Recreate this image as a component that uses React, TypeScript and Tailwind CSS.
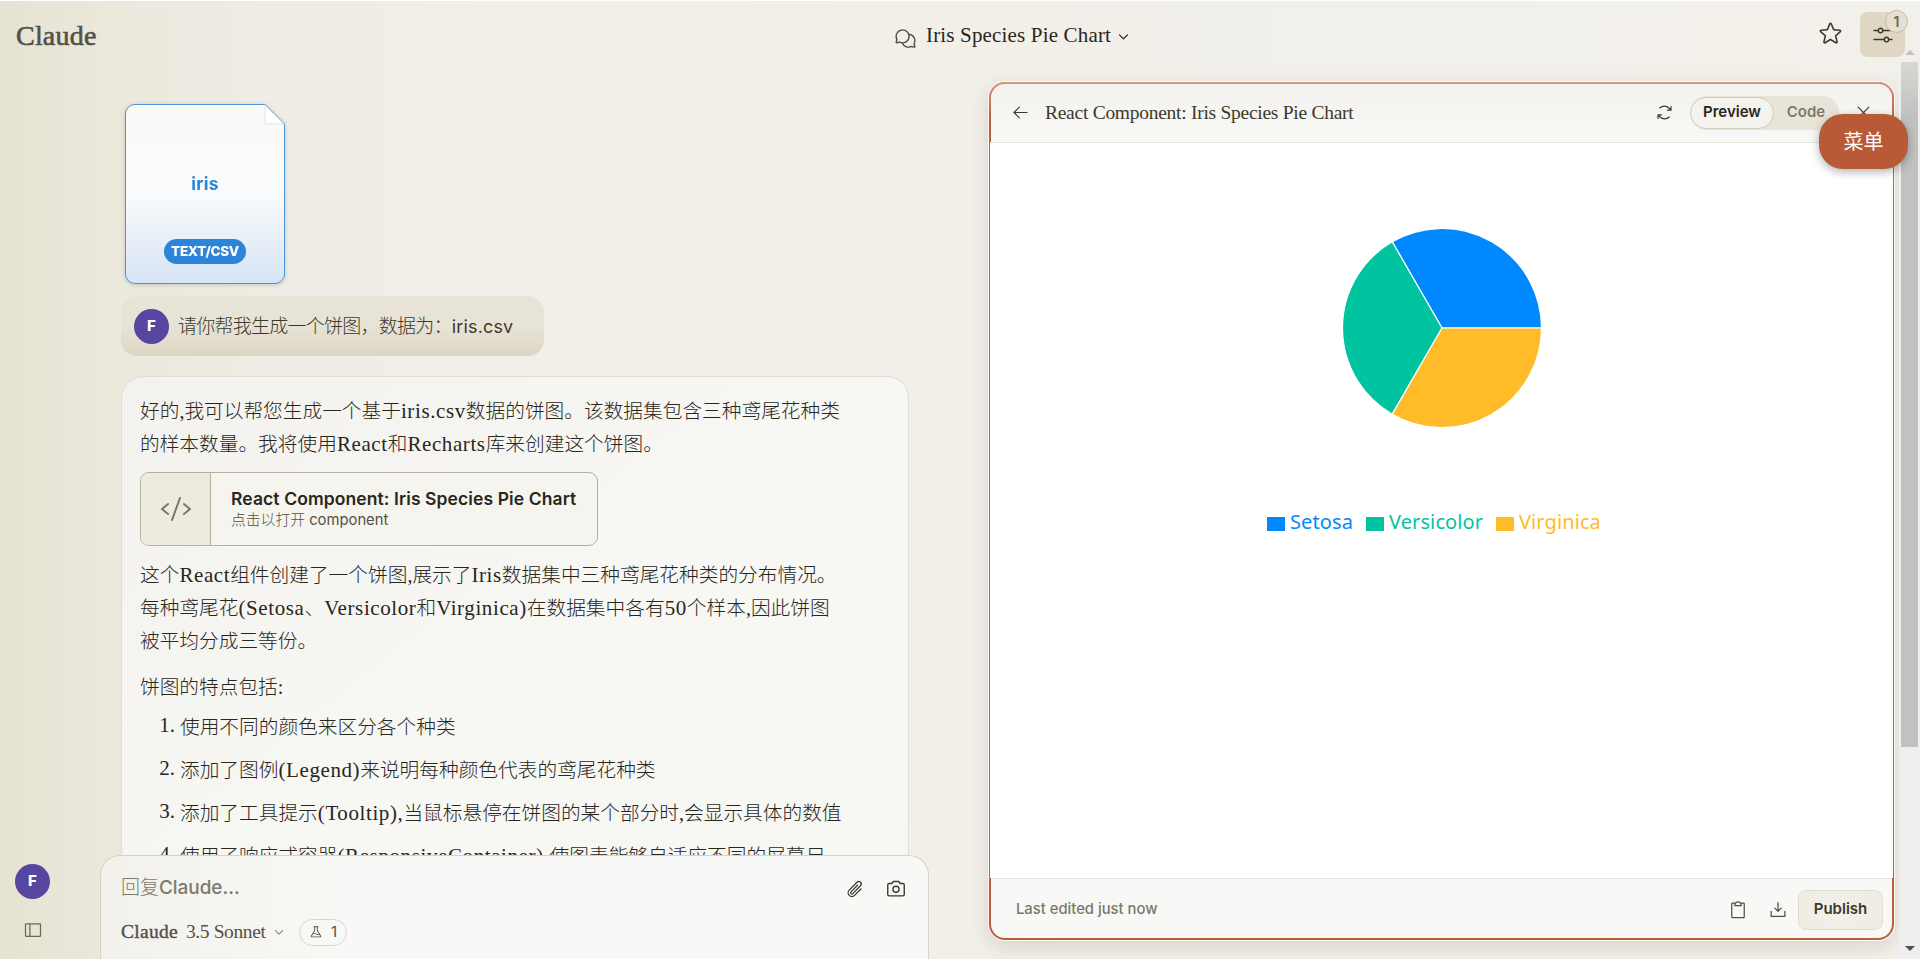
import {
  PiArrowLeft,
  PiArrowsClockwise,
  PiCamera,
  PiCaretDown,
  PiCaretDownBold,
  PiChatsCircle,
  PiClipboard,
  PiCode,
  PiDownloadSimple,
  PiFlask,
  PiPaperclip,
  PiSidebarSimple,
  PiStar,
  PiX,
} from "react-icons/pi";

const species = [
  { name: "Setosa", fill: "#0088FE", dot: "bg-[#0088FE]", text: "text-[#0088FE]", width: "w-[63px]" },
  { name: "Versicolor", fill: "#00C49F", dot: "bg-[#00C49F]", text: "text-[#00C49F]", width: "w-[94px]" },
  { name: "Virginica", fill: "#FFBB28", dot: "bg-[#FFBB28]", text: "text-[#FFBB28]", width: "w-[83px]" },
];

const intro = [
  "好的,我可以帮您生成一个基于iris.csv数据的饼图。该数据集包含三种鸢尾花种类",
  "的样本数量。我将使用React和Recharts库来创建这个饼图。",
];

const summary = [
  "这个React组件创建了一个饼图,展示了Iris数据集中三种鸢尾花种类的分布情况。",
  "每种鸢尾花(Setosa、Versicolor和Virginica)在数据集中各有50个样本,因此饼图",
  "被平均分成三等份。",
];

const items = [
  "使用不同的颜色来区分各个种类",
  "添加了图例(Legend)来说明每种颜色代表的鸢尾花种类",
  "添加了工具提示(Tooltip),当鼠标悬停在饼图的某个部分时,会显示具体的数值",
  "使用了响应式容器(ResponsiveContainer),使图表能够自适应不同的屏幕尺",
];

// Latin runs get the serif face, everything else stays in the CJK one
function Mixed({ text }: { text: string }) {
  return (
    <>
      {text.split(/([\x20-\x7e]+)/).map((part, i) =>
        i % 2 ? (
          <span
            key={i}
            className={
              part.length > 1
                ? "font-['Liberation_Serif',serif] text-[21px] font-normal tracking-[0.6px]"
                : "font-['Liberation_Serif',serif] text-[20px] font-normal"
            }
          >
            {part}
          </span>
        ) : (
          part
        )
      )}
    </>
  );
}

function Lines({ lines }: { lines: string[] }) {
  return (
    <p>
      {lines.map((line) => (
        <span key={line} className="block h-[33px] whitespace-nowrap leading-[33px]">
          <Mixed text={line} />
        </span>
      ))}
    </p>
  );
}

function Avatar() {
  return (
    <div className="flex size-[35px] shrink-0 items-center justify-center rounded-full bg-[#5645a1] font-['Inter',sans-serif] text-[15px] font-extrabold text-white">
      F
    </div>
  );
}

function SlidersIcon() {
  return (
    <svg width="20" height="16" viewBox="0 0 20 16" fill="none" stroke="currentColor" strokeWidth="1.4" strokeLinecap="round">
      <path d="M1 3.5h4.2M9.8 3.5H19M1 12.5h10.2M15.8 12.5H19" />
      <circle cx="7.5" cy="3.5" r="2.2" />
      <circle cx="13.5" cy="12.5" r="2.2" />
    </svg>
  );
}

function Header() {
  return (
    <header className="flex h-[81px] shrink-0 border-t border-white pl-4">
      <div className="w-[878px] pt-[19px] font-['Liberation_Serif',serif] text-[28px] leading-8 tracking-[0.2px] text-[#535146] [-webkit-text-stroke:0.6px]">
        Claude
      </div>
      <div className="flex h-[70px] items-center text-[#29261b]">
        <PiChatsCircle className="mt-1 size-[23px] text-[#535146]" />
        <span className="ml-[9px] w-[187px] whitespace-nowrap font-['Liberation_Serif',serif] text-[21px] tracking-[0.17px]">
          Iris Species Pie Chart
        </span>
        <PiCaretDownBold className="ml-[4px] size-[13px]" />
      </div>
      <div className="ml-auto mr-[15px] flex pt-[11px] text-[#3d3929]">
        <PiStar className="mr-[17px] mt-[9px] size-[25px]" />
        <div className="relative flex size-[45px] items-center justify-center rounded-lg bg-[#dfd7c4]">
          <SlidersIcon />
          <span className="absolute -right-[3px] -top-[2px] flex size-[23px] items-center justify-center rounded-full border border-[#c4bda8] bg-[#e5dfd0] font-['Inter',sans-serif] text-[14px] font-semibold text-[#6b6651]">
            1
          </span>
        </div>
      </div>
    </header>
  );
}

function FileCard() {
  return (
    <div className="ml-1 h-[180px] w-[160px] drop-shadow-[0_1px_2px_rgba(60,50,20,0.2)]">
      <div className="relative flex h-full flex-col items-center rounded-[10px] border border-[#4a94dd] bg-gradient-to-b from-[#fafaf7] via-[#fafbfc] to-[#d6e5f5] font-['Inter',sans-serif] [clip-path:polygon(0_0,140px_0,160px_20px,100%_100%,0_100%)]">
        <svg className="absolute -right-px -top-px" width="21" height="22" viewBox="0 0 21 22">
          <path d="M1 0v20h20z" fill="#fff" stroke="#dfe3e6" />
          <path d="M1 0l20 20" stroke="#4a94dd" strokeWidth="1.2" />
        </svg>
        <span className="mt-[67px] text-[17.5px] font-bold leading-6 tracking-[0.2px] text-[#2c84db]">iris</span>
        <span className="mt-[43px] flex h-[25px] w-[82px] items-center justify-center rounded-full bg-[#2c84db] text-[13.5px] font-extrabold tracking-[-0.3px] text-white">
          TEXT/CSV
        </span>
      </div>
    </div>
  );
}

function ArtifactButton() {
  return (
    <div className="mb-[11px] mt-[13px] flex h-[74px] w-[458px] overflow-hidden rounded-[9px] border border-[#b4b09f] bg-[#f5f4ef] font-['Inter','Noto_Sans_CJK_SC',sans-serif]">
      <div className="flex w-[70px] items-center justify-center border-r border-[#b4b09f] bg-[#edeade] text-[#7a7766]">
        <PiCode className="size-8" />
      </div>
      <div className="whitespace-nowrap pl-5 pt-[14px]">
        <div className="text-[17.5px] font-semibold leading-6 tracking-[0.1px] text-[#29261b]">
          React Component: Iris Species Pie Chart
        </div>
        <div className="text-[14.8px] font-light leading-[18px] text-[#535146]">
          点击以打开 <span className="font-normal">component</span>
        </div>
      </div>
    </div>
  );
}

function Composer() {
  return (
    <div className="absolute bottom-0 left-[100px] flex h-[104px] w-[829px] flex-col rounded-t-[20px] border border-b-0 border-[#d6d3c6] bg-gradient-to-r from-[#f2f1ec] to-[#f8f8f6] to-30% px-5">
      <div className="flex h-[65px] items-center text-[#3d3929]">
        <span className="font-['Inter','Noto_Sans_CJK_SC',sans-serif] text-[19px] font-medium tracking-[-0.05px] text-[#7d7a68]">
          <span className="font-light">回复</span>Claude...
        </span>
        <PiPaperclip className="ml-auto mr-5 size-5" />
        <PiCamera className="mr-[1px] size-[22px]" />
      </div>
      <div className="flex h-[22px] items-center font-['Liberation_Serif',serif] text-[19.5px] text-[#535146]">
        <span className="w-[65px] tracking-[0.3px] [-webkit-text-stroke:0.4px]">Claude</span>
        <span className="w-[81px] whitespace-nowrap tracking-[-0.4px]">3.5 Sonnet</span>
        <PiCaretDown className="ml-[6px] size-3" />
        <span className="ml-[14px] flex h-[27px] w-[48px] items-center justify-center gap-2 rounded-full border border-[#d9d7cd] font-['Inter',sans-serif] text-[15px]">
          <PiFlask className="size-[14px]" />1
        </span>
      </div>
    </div>
  );
}

function Chat() {
  return (
    <main className="w-[788px] pt-[23px]">
      <FileCard />
      <div className="mt-3 flex h-[60px] w-[423px] items-center gap-[9px] rounded-2xl bg-gradient-to-b from-[#e8e4d8] via-[#e7e3d7] to-[#ddd5c2] pl-[13px]">
        <Avatar />
        <span className="-mt-[2px] whitespace-nowrap font-['Noto_Sans_CJK_SC',sans-serif] text-[19px] font-light tracking-[-0.75px] text-[#3d3929]">
          请你帮我生成一个饼图，数据为：
          <span className="font-['Inter',sans-serif] text-[18px] font-normal tracking-[0.15px]">iris.csv</span>
        </span>
      </div>
      <div className="mt-5 h-[620px] rounded-[22px] border border-[#dfddd4] bg-gradient-to-br from-[#f3f2ee] via-[#f7f7f4] to-[#f6f6f2] pl-[18px] pt-4 font-['Noto_Sans_CJK_SC',sans-serif] text-[19.7px] font-light text-[#29261b]">
        <Lines lines={intro} />
        <ArtifactButton />
        <Lines lines={summary} />
        <div className="mt-[13px]">
          <Lines lines={["饼图的特点包括:"]} />
        </div>
        <ol className="mt-[7px] flex flex-col gap-[10px]">
          {items.map((item, i) => (
            <li key={item} className="flex h-[33px] whitespace-nowrap leading-[33px]">
              <span className="w-[40px] pr-[5px] text-right font-['Liberation_Serif',serif] text-[21px] font-normal">
                {i + 1}.
              </span>
              <span>
                <Mixed text={item} />
              </span>
            </li>
          ))}
        </ol>
      </div>
    </main>
  );
}

function PieChart() {
  const r = 99.5;
  const point = (deg: number) => {
    const a = (deg * Math.PI) / 180;
    return `${100 + r * Math.cos(a)} ${100 - r * Math.sin(a)}`;
  };
  return (
    <svg width="200" height="200" viewBox="0 0 200 200">
      {species.map((s, i) => (
        <path
          key={s.name}
          d={`M100 100L${point(i * 120)}A${r} ${r} 0 0 0 ${point((i + 1) * 120)}Z`}
          fill={s.fill}
          stroke="#fff"
          strokeWidth="1.2"
        />
      ))}
    </svg>
  );
}

function Artifact() {
  return (
    <section className="ml-20 mt-px flex h-[858px] w-[905px] flex-col overflow-hidden rounded-2xl bg-[#bd5d3a] shadow-[0_0_0_1px_#fbfaf7,0_6px_20px_rgba(60,55,30,0.16)]">
      <div className="bg-gradient-to-b from-[#d49b83] to-[#bd5d3a] to-60% px-[2px] pt-[2px]">
        <div className="flex h-[58px] items-center rounded-t-[14px] bg-gradient-to-b from-[#f3f2ef] to-[#f8f8f6] pb-px pl-[20px] pr-[19px] text-[#3d3929]">
          <PiArrowLeft className="size-[19px]" />
          <span className="ml-[15px] whitespace-nowrap font-['Liberation_Serif',serif] text-[19.5px] tracking-[-0.27px]">
            React Component: Iris Species Pie Chart
          </span>
          <PiArrowsClockwise className="ml-auto size-[19px]" />
          <div className="ml-[16px] flex h-[34px] w-[149px] items-center rounded-full bg-[#e8e5d8] font-['Inter',sans-serif] text-[15px] font-semibold">
            <span className="flex h-8 w-[84px] items-center justify-center rounded-full border border-[#d0cdbd] bg-[#f4f3ee] text-[#29261b]">
              Preview
            </span>
            <span className="flex-1 pr-[1px] text-center text-[#7d7a68]">Code</span>
          </div>
          <PiX className="ml-[15px] size-[19px]" />
        </div>
      </div>
      <div className="mx-px flex flex-1 flex-col items-center border-t border-[#e6e4dc] bg-white">
        <div className="mt-[85px] h-[200px]">
          <PieChart />
        </div>
        <div className="mr-[14px] mt-[79px] flex h-[30px] items-center gap-[13px] font-['Noto_Sans',sans-serif] text-[20px] tracking-[0.1px]">
          {species.map((s) => (
            <div key={s.name} className={`flex items-center gap-[5px] ${s.text}`}>
              <span className={`mt-[3px] h-[14px] w-[18px] ${s.dot}`} />
              <span className={`whitespace-nowrap ${s.width}`}>{s.name}</span>
            </div>
          ))}
        </div>
      </div>
      <div className="px-[2px] pb-[2px]">
        <div className="flex h-[60px] items-center rounded-b-[14px] border-t border-[#e6e4dc] bg-[#f8f8f6] pl-[25px] pr-[9px] pt-[2px] font-['Inter',sans-serif] text-[#535146]">
          <span className="text-[14.8px] font-medium text-[#7a7768]">Last edited just now</span>
          <PiClipboard className="ml-auto size-5" />
          <PiDownloadSimple className="ml-5 mr-[10px] size-5" />
          <span className="flex h-10 w-[85px] items-center justify-center rounded-lg border border-[#e0ddd1] bg-[radial-gradient(ellipse_at_center,#f3f1eb,#eeebe2)] text-[15px] font-semibold text-[#3d3929]">
            Publish
          </span>
        </div>
      </div>
    </section>
  );
}

export default function App() {
  return (
    <div className="relative flex h-[959px] flex-col overflow-hidden bg-[linear-gradient(to_right,#e6e2d3_0px,#ebe8dc_110px,#eeece4_260px,#f1efe8_520px,#f2f0ea_100%)]">
      <Header />
      <div className="flex">
        <aside className="flex w-[121px] shrink-0 flex-col pl-[15px] pt-[783px]">
          <Avatar />
          <PiSidebarSimple className="ml-2 mt-[21px] size-[20px] text-[#6b6858]" />
        </aside>
        <Chat />
        <Artifact />
      </div>
      <Composer />
      <div className="absolute right-0 top-[45px] flex h-[914px] w-[21px] flex-col items-center bg-gradient-to-b from-transparent from-1% to-[#efefef] to-10%">
        <div className="mt-[5px] border-x-[5px] border-b-[5px] border-x-transparent border-b-[#c4c3be]" />
        <div className="mt-[7px] h-[685px] w-[17px] bg-gradient-to-b from-[#d8d7d2] to-[#c1c1c1] to-8%" />
        <div className="mb-[8px] mt-auto border-x-[5px] border-t-[5px] border-x-transparent border-t-[#505050]" />
      </div>
      <div className="absolute left-[1819px] top-[114px] flex h-[55px] w-[89px] items-center justify-center rounded-[24px] bg-[#b85a35] pb-[2px] font-['Noto_Sans_CJK_SC',sans-serif] text-[20px] text-white shadow-[0_3px_10px_rgba(0,0,0,0.3)]">
        菜单
      </div>
    </div>
  );
}
